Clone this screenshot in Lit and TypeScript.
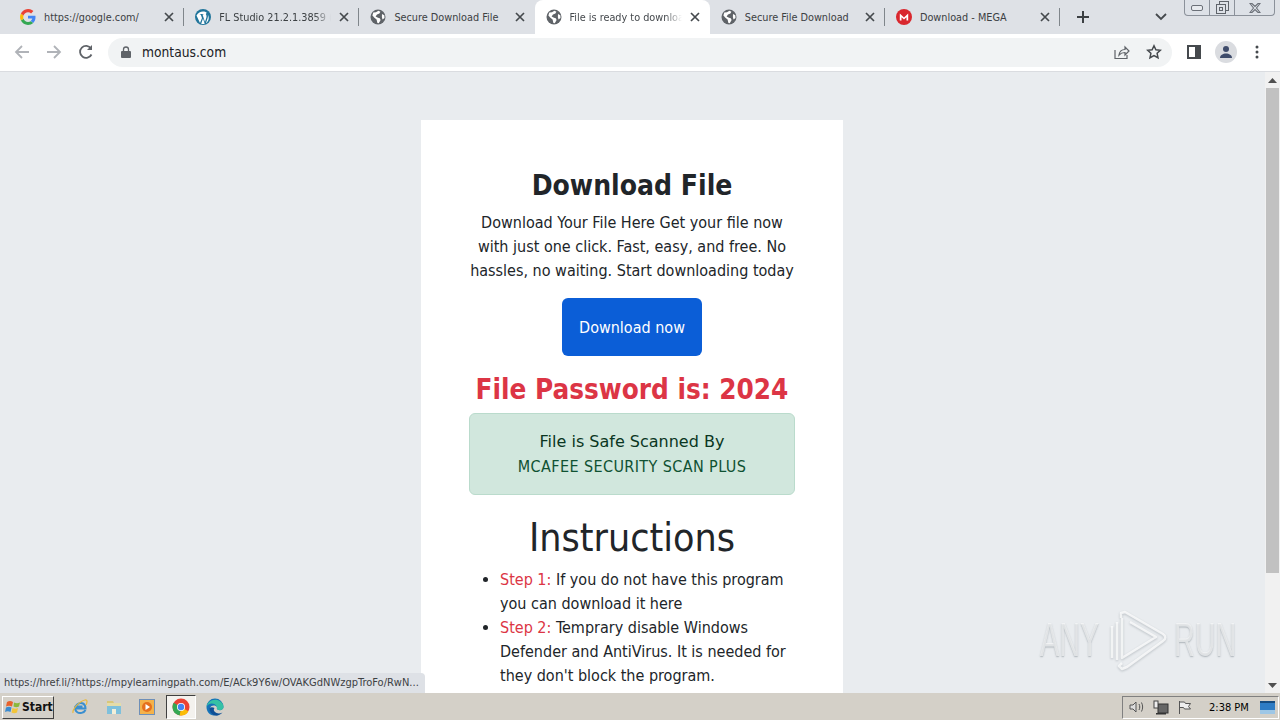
import { LitElement, css, html, svg } from 'lit';
import { customElement } from 'lit/decorators.js';

const globe = svg`<circle cx="8" cy="8" r="7.5" fill="#5f6368"/><path d="M3.300 3.500 6 3.200l2.400-1.400 2 1-1 1.800-2.400 1L5.600 7.600 8 8.800l1.800.4.800 1.800-1.800 3.300-1.400-.2-.8-3.700-2.200-1.600-2-2.400z" fill="#fff"/><path d="M12 5l2.300 1.300.2 2.700-2 1.500-.6-2.500z" fill="#fff"/>`;

const favicons = {
  google: svg`<path d="M15.500 8.200c0-.6 0-1-.1-1.500H8v2.900h4.300c-.2 1-.7 1.800-1.600 2.400l2.500 1.900c1.500-1.400 2.300-3.400 2.300-5.700z" fill="#4285f4"/><path d="M8 16c2.100 0 3.900-.7 5.200-1.900l-2.500-1.900c-.7.500-1.600.8-2.700.8-2.100 0-3.800-1.400-4.500-3.300L.9 11.600C2.200 14.200 4.900 16 8 16z" fill="#34a853"/><path d="M3.500 9.700a4.800 4.800 0 0 1 0-3.100L.9 4.600a8 8 0 0 0 0 7z" fill="#fbbc05"/><path d="M8 3.200c1.200 0 2.300.4 3.100 1.200l2.300-2.300A8 8 0 0 0 .9 4.600l2.600 2c.7-1.900 2.400-3.400 4.500-3.400z" fill="#ea4335"/>`,
  wp: svg`<circle cx="8" cy="8" r="8" fill="#21759b"/><path d="M1.500 6.500 5 14l2-5-1.300-3.500H4.800V5h3.700v.5H7.500L10 13l1.400-4.500c.4-1.300 0-2.200-.4-3-.3-.7.100-1.400.9-1.500-2.700-2.400-7.900-1.800-10.400 2.500z" fill="#fff"/><path d="M8 9.500 6.200 14.700c1.200.4 2.400.3 3.500 0zM12.800 5.500c.4 1.500.1 2.800-.3 4l-1.600 4.700c2.900-1.600 3.600-5.600 1.900-8.700z" fill="#fff"/>`,
  globe,
  mega: svg`<circle cx="8" cy="8" r="8" fill="#d9272e"/><path d="M3.800 11.500V4.600L8 8.600l4.200-4v6.900h-1.700V8.200L8 10.600 5.500 8.200v3.300z" fill="#fff"/>`,
};

type Tab = { icon: keyof typeof favicons; title: string; active?: boolean; fade?: boolean };
const tabs: Tab[] = [
  { icon: 'google', title: 'https://google.com/' },
  { icon: 'wp', title: 'FL Studio 21.2.1.3859 (64-bit)', fade: true },
  { icon: 'globe', title: 'Secure Download File' },
  { icon: 'globe', title: 'File is ready to download', active: true, fade: true },
  { icon: 'globe', title: 'Secure File Download' },
  { icon: 'mega', title: 'Download - MEGA' },
];

@customElement('app-root')
export class AppRoot extends LitElement {
  static styles = css`
    :host {
      display: flex;
      flex-direction: column;
      width: 1280px;
      height: 720px;
      overflow: hidden;
      position: relative;
      font-family: 'DejaVu Sans Condensed', 'DejaVu Sans', 'Liberation Sans', sans-serif;
      font-stretch: condensed;
      color: #212529;
    }
    svg {
      display: block;
      flex: none;
    }
    .tabstrip {
      height: 34px;
      flex: none;
      background: #dee1e6;
      display: flex;
      align-items: stretch;
      padding-left: 9px;
      position: relative;
    }
    .tab {
      width: 175.2px;
      flex: none;
      box-sizing: border-box;
      display: flex;
      align-items: center;
      padding: 0 10px 0 11px;
      gap: 8px;
      position: relative;
      font-size: 10.8px;
      color: #3c4043;
    }
    .tab:not(.active):not(.before-active)::after {
      content: '';
      position: absolute;
      right: 0;
      top: 8px;
      height: 18px;
      width: 1px;
      background: #80868b;
    }
    .tab.active {
      background: #fff;
      border-radius: 8px 8px 0 0;
      color: #45494d;
    }
    .title {
      flex: 1;
      min-width: 0;
      white-space: nowrap;
      overflow: hidden;
    }
    .title.fade {
      -webkit-mask-image: linear-gradient(90deg, #000 85%, transparent);
      mask-image: linear-gradient(90deg, #000 85%, transparent);
    }
    .newtab {
      margin-left: 17px;
      align-self: center;
    }
    .tabmenu {
      margin-left: 66px;
      align-self: center;
    }
    .winctl {
      position: absolute;
      right: 5px;
      top: 0;
      width: 91px;
      height: 16px;
      box-sizing: border-box;
      border: 1px solid #8b919a;
      border-top: 0;
      border-radius: 0 0 4px 4px;
      display: grid;
      grid-template-columns: 25px 25px 1fr;
      background: #dde1e7;
    }
    .winctl > div {
      display: flex;
      align-items: center;
      justify-content: center;
      border-right: 1px solid #8b919a;
    }
    .winctl > div:last-child {
      border-right: 0;
    }
    .toolbar {
      height: 38px;
      flex: none;
      box-sizing: border-box;
      background: #fff;
      border-bottom: 1px solid #dadce0;
      display: flex;
      align-items: center;
      padding: 0 0 1px 14px;
    }
    .nav {
      display: flex;
      gap: 16px;
      align-items: center;
      margin-right: 14px;
    }
    .omnibox {
      width: 1064px;
      height: 29px;
      flex: none;
      border-radius: 15px;
      background: #f1f3f4;
      display: flex;
      align-items: center;
      box-sizing: border-box;
      padding: 0 10px 0 13px;
      font-size: 13.7px;
      color: #202124;
      gap: 11px;
    }
    .url {
      flex: 1;
    }
    .omni-right {
      display: flex;
      gap: 16px;
      align-items: center;
    }
    .tb-right {
      display: flex;
      align-items: center;
      margin-left: 15px;
      gap: 14px;
    }
    .menu-dots {
      margin-left: 4px;
    }
    .avatar {
      width: 22px;
      height: 22px;
      border-radius: 50%;
      background: #dadce0;
      display: flex;
      align-items: center;
      justify-content: center;
    }
    .viewport {
      flex: 1;
      min-height: 0;
      display: flex;
      background: #e9ecef;
    }
    .page {
      flex: 1;
      min-width: 0;
      overflow: hidden;
      display: flex;
      justify-content: center;
      padding-top: 48px;
      box-sizing: border-box;
    }
    .card {
      width: 422px;
      margin-right: 1px;
      background: #fff;
      box-sizing: border-box;
      padding: 49px 48px 48px;
      text-align: center;
      flex: none;
      font-size: 16px;
      line-height: 24px;
      align-self: flex-start;
    }
    h2 {
      margin: 0 0 8px;
      font-size: 28px;
      line-height: 34px;
      font-weight: 700;
    }
    p {
      margin: 0 0 15px;
    }
    .btn {
      display: inline-block;
      width: 140px;
      height: 58px;
      line-height: 60px;
      background: #0b5ed7;
      color: #fff;
      border-radius: 6px;
      text-decoration: none;
    }
    .pw {
      margin: 17px 0 6px;
      font-size: 27.6px;
      line-height: 34px;
      font-weight: 700;
      color: #dc3545;
      white-space: nowrap;
    }
    .alert {
      background: #d1e7dd;
      border: 1px solid #badbcc;
      border-radius: 6px;
      padding: 16px 15px 15px;
      color: #0f5132;
      margin-bottom: 19px;
    }
    .alert b {
      font-family: 'DejaVu Sans', sans-serif;
      font-stretch: normal;
      font-weight: 400;
      color: #0a3622;
      display: block;
      margin-bottom: 1px;
    }
    .alert span {
      letter-spacing: 0.4px;
    }
    h1 {
      margin: 0 0 6px;
      font-size: 39px;
      line-height: 48px;
      font-weight: 400;
    }
    ul {
      margin: 0;
      padding: 0 0 0 31px;
      text-align: left;
    }
    .step {
      color: #dc3545;
    }
    .scrollbar {
      width: 15px;
      flex: none;
      background: #f1f1f1;
      display: flex;
      flex-direction: column;
      align-items: center;
    }
    .arrow {
      height: 16px;
      flex: none;
      display: flex;
      align-items: center;
      justify-content: center;
    }
    .thumb {
      width: 13px;
      height: 485px;
      flex: none;
      background: #c1c1c1;
    }
    .spacer {
      flex: 1;
    }
    .status {
      position: absolute;
      left: 0;
      bottom: 27px;
      width: 425px;
      height: 20px;
      box-sizing: border-box;
      background: #dee1e6;
      border-radius: 0 4px 0 0;
      padding-left: 4px;
      font-size: 11px;
      line-height: 20px;
      color: #3c4043;
      white-space: nowrap;
      overflow: hidden;
    }
    .watermark {
      position: absolute;
      left: 1040px;
      top: 608px;
      display: flex;
      align-items: center;
      gap: 3px;
      color: rgba(255, 255, 255, 0.6);
      font-family: 'Liberation Sans', sans-serif;
      font-stretch: normal;
      font-size: 48px;
      line-height: 64px;
      text-shadow: 0 1px 2px rgba(100, 110, 120, 0.45);
    }
    .watermark span {
      display: inline-block;
      transform: scaleX(0.6);
      transform-origin: left center;
    }
    .wm-any {
      width: 60px;
    }
    .wm-run {
      width: 60px;
      margin-left: 4px;
    }
    .wm-icon {
      filter: drop-shadow(0 1px 1px rgba(100, 110, 120, 0.45));
    }
    .taskbar {
      height: 27px;
      flex: none;
      background: #d4d0c8;
      display: flex;
      align-items: center;
      box-sizing: border-box;
      padding-top: 1px;
    }
    .start {
      margin-left: 2px;
      width: 52px;
      height: 23px;
      box-sizing: border-box;
      border: 1px solid;
      border-color: #fff #404040 #404040 #fff;
      display: flex;
      align-items: center;
      gap: 0;
      padding-left: 1px;
      font-weight: 700;
      font-size: 12px;
      color: #111;
    }
    .quick {
      display: flex;
      align-items: center;
      margin-left: 17px;
      gap: 17px;
    }
    .pressed {
      width: 30px;
      height: 24px;
      margin: 0 -7px 0 -6px;
      box-sizing: border-box;
      border: 1px solid;
      border-color: #404040 #fff #fff #404040;
      background: #f4f2ee;
      display: flex;
      align-items: center;
      justify-content: center;
    }
    .tray {
      margin-left: auto;
      margin-right: 1px;
      width: 157px;
      height: 23px;
      box-sizing: border-box;
      border: 1px solid;
      border-color: #808080 #fff #fff #808080;
      display: flex;
      align-items: center;
      padding-left: 6px;
      gap: 8px;
      font-size: 11px;
      color: #000;
    }
    .clock {
      margin-left: 9px;
      white-space: nowrap;
    }
    .show-desktop {
      margin-left: auto;
      margin-right: 3px;
    }
  `;

  private _close() {
    return html`<svg width="10" height="10" viewBox="0 0 10 10" fill="none" stroke="#45494d" stroke-width="1.7"><path d="M1 1l8 8M9 1l-8 8"/></svg>`;
  }

  private _tab(t: Tab, i: number) {
    const beforeActive = tabs[i + 1]?.active;
    return html`
      <div class="tab ${t.active ? 'active' : ''} ${beforeActive ? 'before-active' : ''}">
        <svg width="16" height="16" viewBox="0 0 16 16">${favicons[t.icon]}</svg>
        <div class="title ${t.fade ? 'fade' : ''}">${t.title}</div>
        ${this._close()}
      </div>
    `;
  }

  render() {
    return html`
      <div class="tabstrip">
        ${tabs.map((t, i) => this._tab(t, i))}
        <svg class="newtab" width="12" height="12" viewBox="0 0 12 12" stroke="#3c4043" stroke-width="2"><path d="M6 0v12M0 6h12"/></svg>
        <svg class="tabmenu" width="12" height="8" viewBox="0 0 12 8" fill="none" stroke="#45494d" stroke-width="1.800"><path d="M1 1l5 5 5-5"/></svg>
        <div class="winctl">
          <div><svg width="12" height="6" viewBox="0 0 12 6" fill="#e8ebef" stroke="#6b7078"><rect x=".5" y=".5" width="11" height="5" rx="1.500"/></svg></div>
          <div><svg width="13" height="13" viewBox="0 0 13 13" fill="none" stroke="#5f646b"><rect x="3.500" y=".5" width="9" height="9"/><rect x=".5" y="3.500" width="9" height="9" fill="#dde1e7"/><rect x="3.500" y="6.500" width="3" height="3"/></svg></div>
          <div><svg width="12" height="10" viewBox="0 0 12 10" fill="none" stroke="#6b7078" stroke-width="1.100"><path d="M1 .5h2L6 3.500 9 .5h2L7.500 5 11 9.500H9L6 6.500 3 9.500H1L4.500 5z"/></svg></div>
        </div>
      </div>
      <div class="toolbar">
        <div class="nav">
          <svg width="16" height="16" viewBox="0 0 16 16" fill="none" stroke="#b0b3b8" stroke-width="1.800"><path d="M15 8H2M8 2 2 8l6 6"/></svg>
          <svg width="16" height="16" viewBox="0 0 16 16" fill="none" stroke="#b0b3b8" stroke-width="1.800"><path d="M1 8h13M8 2l6 6-6 6"/></svg>
          <svg width="16" height="16" viewBox="0 0 16 16" fill="none" stroke="#5f6368" stroke-width="1.800"><path d="M13.500 10.500A6 6 0 1 1 13 4.500"/><path d="M14 1v5H9" fill="#5f6368" stroke="none"/></svg>
        </div>
        <div class="omnibox">
          <svg width="10" height="12" viewBox="0 0 10 12"><rect y="5" width="10" height="7" rx="1" fill="#5f6368"/><path d="M2.500 5.500V3.500a2.500 2.500 0 0 1 5 0v2" fill="none" stroke="#5f6368" stroke-width="1.300"/></svg>
          <div class="url">montaus.com</div>
          <div class="omni-right">
            <svg width="16" height="16" viewBox="0 0 16 16" fill="none" stroke="#5f6368" stroke-width="1.200"><path d="M1 6v8.500h12V11"/><path d="M5 11c.5-3.500 3-5.500 6-5.500V3l4 4-4 4V8.500c-2.500 0-4.500.8-6 2.500z"/></svg>
            <svg width="16" height="16" viewBox="0 0 16 16" fill="none" stroke="#45494d" stroke-width="1.500"><path d="M8 1.800l1.900 4 4.400.5-3.200 3 .9 4.400L8 11.500l-4 2.200.9-4.400-3.200-3 4.400-.5z"/></svg>
          </div>
        </div>
        <div class="tb-right">
          <svg width="14" height="14" viewBox="0 0 14 14"><path d="M0 0h14v14H0z" fill="#45494d"/><path d="M2 2h6v10H2z" fill="#fff"/></svg>
          <div class="avatar">
            <svg width="14" height="14" viewBox="0 0 14 14" fill="#3f4c6b"><circle cx="7" cy="4" r="3"/><path d="M1 13c0-3 3-4.500 6-4.500s6 1.500 6 4.500z"/></svg>
          </div>
          <svg class="menu-dots" width="4" height="14" viewBox="0 0 4 14" fill="#45494d"><circle cx="2" cy="2" r="1.500"/><circle cx="2" cy="7" r="1.500"/><circle cx="2" cy="12" r="1.500"/></svg>
        </div>
      </div>
      <div class="viewport">
        <div class="page">
          <div class="card">
            <h2>Download File</h2>
            <p>Download Your File Here Get your file now with just one click. Fast, easy, and free. No hassles, no waiting. Start downloading today</p>
            <a class="btn">Download now</a>
            <div class="pw">File Password is: 2024</div>
            <div class="alert"><b>File is Safe Scanned By</b><span>MCAFEE SECURITY SCAN PLUS</span></div>
            <h1>Instructions</h1>
            <ul>
              <li><span class="step">Step 1:</span> If you do not have this program you can download it here</li>
              <li><span class="step">Step 2:</span> Temprary disable Windows Defender and AntiVirus. It is needed for they don't block the program.</li>
            </ul>
          </div>
        </div>
        <div class="scrollbar">
          <div class="arrow"><svg width="9" height="5" viewBox="0 0 9 5" fill="#505050"><path d="M4.500 0 9 5H0z"/></svg></div>
          <div class="thumb"></div>
          <div class="spacer"></div>
          <div class="arrow"><svg width="9" height="5" viewBox="0 0 9 5" fill="#505050"><path d="M0 0h9L4.500 5z"/></svg></div>
        </div>
      </div>
      <div class="status">https://href.li/?https://mpylearningpath.com/E/ACk9Y6w/OVAKGdNWzgpTroFo/RwN...</div>
      <div class="watermark">
        <span class="wm-any">ANY</span>
        <svg class="wm-icon" width="64" height="64" viewBox="0 0 64 64" fill="none" stroke="rgba(255,255,255,.75)" stroke-width="2.500" stroke-linejoin="round"><path d="M18 10V5l4-1 38 22c3 2 3 5 0 7L24 59l-5 2-3-3 3-3"/><path d="M19 10v40l34-21-26-15"/><path d="M9 18v32M14 14v38"/></svg>
        <span class="wm-run">RUN</span>
      </div>
      <div class="taskbar">
        <div class="start">
          <svg width="18" height="16" viewBox="0 0 18 16"><path d="M3 3c2-1.500 4-1.500 6 0L8 7.500C6 6.500 4 6.500 2 7.500z" fill="#e8622c"/><path d="M10 3.500c2 1 4 1 6 0l-1 4c-2 1-3.500 1-5.500 0z" fill="#8bb83a"/><path d="M2 8.500c2-1 4-1 5.500 0l-1 4.500c-2-1-3.500-1-5.500 0z" fill="#3a8bd0"/><path d="M8.500 9c2 1 3.500 1 5.500 0l-1 4.500c-2 1-3.500 1-5.500 0z" fill="#f2c53a"/></svg>
          Start
        </div>
        <div class="quick">
          <svg width="18" height="18" viewBox="0 0 18 18" fill="none"><path d="M14.500 10.500H4.500C4.500 6 9 4 12 5.500c2 1 2.500 3 2.500 5zM4.500 8.500h7" stroke="#3a8fd0" stroke-width="2"/><path d="M14.500 12c-1.500 3-6 4-8.500 2C4 12.500 4 10 4.500 8" stroke="#3a8fd0" stroke-width="2"/><path d="M2 15C1 11 9 3 14 2c3-.5 2 3 1 5" stroke="#e9b83c" stroke-width="1.200"/></svg>
          <svg width="16" height="16" viewBox="0 0 16 16"><path d="M1 4h14v11H1z" fill="#e5dca8"/><path d="M1 2h6l1 2H1z" fill="#d9c77a"/><path d="M1 7h14v8H1z" fill="#7ec0dc"/><path d="M6 10h4v5H6z" fill="#f3efd8"/></svg>
          <svg width="16" height="16" viewBox="0 0 16 16"><rect x=".5" y=".5" width="15" height="15" fill="#f4b24a" stroke="#6e8fb8"/><circle cx="8" cy="8" r="5" fill="#e5701d"/><path d="M6.500 5 11 8l-4.500 3z" fill="#fff"/></svg>
          <div class="pressed">
            <svg width="18" height="18" viewBox="0 0 18 18"><circle cx="9" cy="9" r="8.500" fill="#ea4335"/><path d="M9 9 16.400 13.200A8.500 8.500 0 0 1 7.600 17.400z" fill="#fbbc05"/><path d="M9 9 7.600 17.400A8.500 8.500 0 0 1 1.600 4.800z" fill="#34a853"/><circle cx="9" cy="9" r="4" fill="#fff"/><circle cx="9" cy="9" r="3.200" fill="#4285f4"/></svg>
          </div>
          <svg width="18" height="18" viewBox="0 0 18 18"><path d="M.5 9a8.500 8.500 0 0 1 17 0c0 2.500-2.500 3.500-5 3-1.500-.3-2-1.500-1.500-3-1-2-6-2.500-7 1-.5 2 .5 5 4.500 7.500C4 17.800.5 14 .5 9z" fill="#1673b8"/><path d="M.5 9c.5-5 6-8.500 11-7 3 1 6 3.500 6 7 0 2.500-2.500 3.500-5 3-1.500-.3-2-1.500-1.500-3C9 4 2 4.500.5 9z" fill="#35c1a5"/><path d="M3.500 10c-.5 3 2 6.500 5 7.500 3 .5 6-.5 8-3-3 1.500-6 1-7.500-.5-1.500-1-1.500-3-.5-4-1.500-1-4-1-5 0z" fill="#0e4f96"/></svg>
        </div>
        <div class="tray">
          <svg width="16" height="14" viewBox="0 0 16 14" fill="none" stroke="#555"><path d="M1 5h3l3-3v10L4 9H1z" fill="#ddd"/><path d="M10 4c1 2 1 4 0 6M12.500 2.500c1.500 3 1.500 6 0 9"/></svg>
          <svg width="16" height="15" viewBox="0 0 16 15"><rect x="5" y="4" width="10" height="9" fill="#666" stroke="#333"/><rect x="1" y="1" width="4" height="7" fill="#eee" stroke="#444"/><path d="M3 13h10v1.500H3z" fill="#333"/></svg>
          <svg width="15" height="15" viewBox="0 0 15 15" fill="#eee" stroke="#555"><path d="M2.500 1v13M2.500 2h5l1 1.500h5l-2 3 2 2.500h-6l-1-1.500h-4"/></svg>
          <div class="clock">2:38 PM</div>
          <svg class="show-desktop" width="15" height="13" viewBox="0 0 15 13"><rect width="15" height="13" fill="#2e7cc4"/><path d="M0 9h15v4H0z" fill="#9ec7e6"/><path d="M0 0h15v2H0z" fill="#164c80"/></svg>
        </div>
      </div>
    `;
  }
}
